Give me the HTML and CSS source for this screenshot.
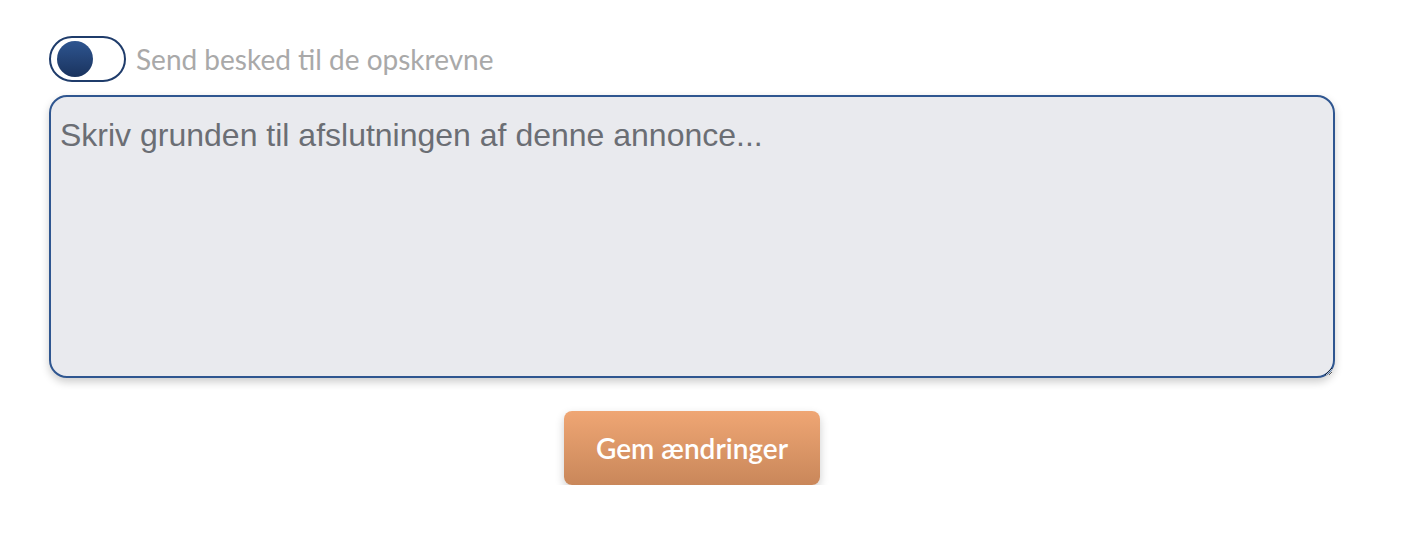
FILE: index.html
```html
<!DOCTYPE html>
<html lang="da">
<head>
  <meta charset="UTF-8" />
  <meta name="viewport" content="width=device-width, initial-scale=1" />
  <title>Afslut annonce</title>
  <link rel="stylesheet" href="styles.css">
</head>
<body>

  <form class="close-form">
    <label class="notify-row">
      <span class="switch">
        <span class="switch-knob"></span>
      </span>
      <span class="notify-label">Send besked til de opskrevne</span>
    </label>

    <textarea class="reason" placeholder="Skriv grunden til afslutningen af denne annonce..."></textarea>

    <div class="actions">
      <button type="button" class="save-btn">Gem ændringer</button>
    </div>
  </form>

</body>
</html>
```

FILE: styles.css
```css
:root {
  --navy: #1f3c6b;
  --border-blue: #2f5690;
  --field-bg: #e9eaee;
  --muted: #a9a9a9;
  --placeholder: #6b6e74;
  --font-stack: Lato, 'Open Sans', sans-serif;
}

* {
  margin: 0;
  padding: 0;
  box-sizing: border-box;
}

body {
  font-family: var(--font-stack);
  background-color: #fff;
}

.close-form {
  width: 1286px;
  margin-left: 49px;
  padding-top: 36px;
  display: flex;
  flex-direction: column;
}

.notify-row {
  display: flex;
  align-items: center;
  gap: 10px;
  cursor: pointer;
}

.switch {
  width: 77px;
  height: 46px;
  border: 2px solid var(--navy);
  border-radius: 23px;
  display: flex;
  align-items: center;
  padding-left: 6px;
}

.switch-knob {
  width: 36px;
  height: 36px;
  border-radius: 50%;
  background: linear-gradient(#2e5590, #1a335e);
}

.notify-label {
  font-size: 28px;
  color: var(--muted);
}

.reason {
  margin-top: 13px;
  height: 283px;
  width: 100%;
  background-color: var(--field-bg);
  border: 2px solid var(--border-blue);
  border-radius: 18px;
  padding: 20px 9px 16px;
  font-family: 'Liberation Sans', Arial, sans-serif;
  font-size: 32px;
  color: #333;
  box-shadow: 0 4px 8px rgba(0, 0, 0, 0.2);
  resize: vertical;
  outline: none;
}

.reason::placeholder {
  color: var(--placeholder);
}

.actions {
  display: flex;
  justify-content: center;
  margin-top: 33px;
}

.save-btn {
  width: 256px;
  height: 74px;
  border: none;
  border-radius: 8px;
  background: linear-gradient(#efa674, #c9875a);
  color: #fff;
  font-family: var(--font-stack);
  font-size: 28px;
  font-weight: 600;
  box-shadow: 0 4px 10px rgba(0, 0, 0, 0.2);
  cursor: pointer;
}
```
